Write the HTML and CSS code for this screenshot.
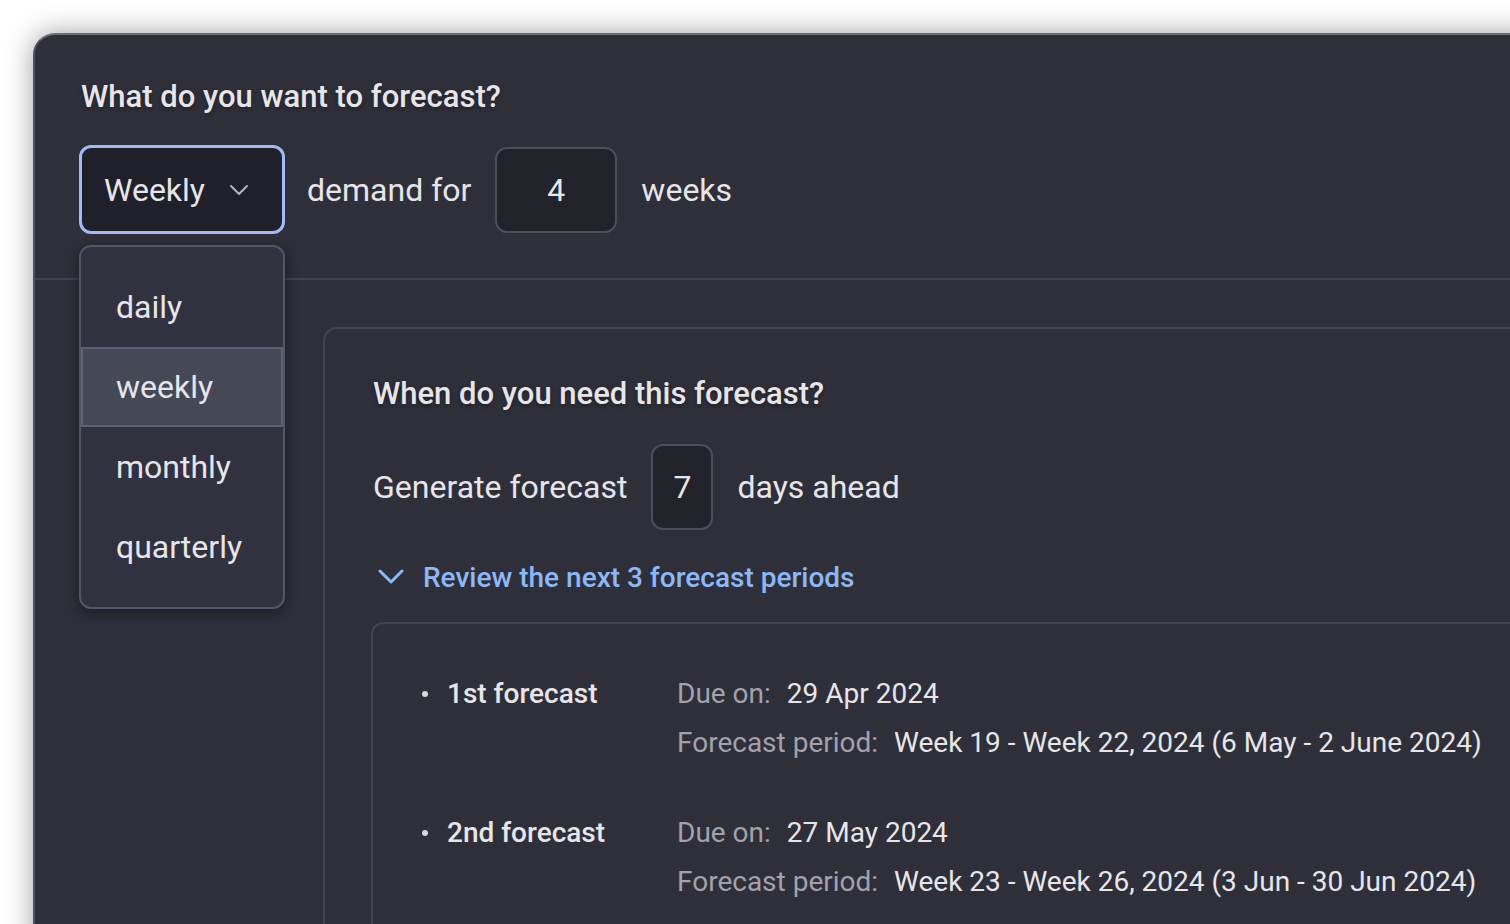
FILE: index.html
```html
<!DOCTYPE html>
<html lang="en">
<head>
  <meta charset="UTF-8" />
  <title>Forecast Settings</title>
  <link rel="stylesheet" href="styles.css">
</head>
<body>
  <div class="panel">
    <section class="top">
      <h1 class="question">What do you want to forecast?</h1>
      <div class="row">
        <div class="select-wrap">
          <button type="button" class="select">
            <span>Weekly</span>
            <svg class="chev" width="20" height="12" viewBox="0 0 20 12"><path d="M2 2 L10 10 L18 2" fill="none" stroke="#b4b4bc" stroke-width="2" stroke-linecap="round" stroke-linejoin="round"/></svg>
          </button>
          <ul class="menu">
            <li>daily</li>
            <li class="active">weekly</li>
            <li>monthly</li>
            <li>quarterly</li>
          </ul>
        </div>
        <span>demand for</span>
        <div class="num wide">4</div>
        <span>weeks</span>
      </div>
    </section>

    <section class="bottom">
      <div class="card">
        <h2 class="question">When do you need this forecast?</h2>
        <div class="row short">
          <span>Generate forecast</span>
          <div class="num narrow">7</div>
          <span>days ahead</span>
        </div>
        <button type="button" class="toggle">
          <svg width="26" height="16" viewBox="0 0 26 16"><path d="M2 2 L13 13 L24 2" fill="none" stroke="#8cb8f8" stroke-width="3" stroke-linecap="round" stroke-linejoin="round"/></svg>
          <span>Review the next 3 forecast periods</span>
        </button>
        <div class="periods">
          <div class="period">
            <span class="dot"></span>
            <span class="name">1st forecast</span>
            <div class="details">
              <div><span class="label">Due on:</span>29 Apr 2024</div>
              <div><span class="label">Forecast period:</span>Week 19 - Week 22, 2024 (6 May - 2 June 2024)</div>
            </div>
          </div>
          <div class="period">
            <span class="dot"></span>
            <span class="name">2nd forecast</span>
            <div class="details">
              <div><span class="label">Due on:</span>27 May 2024</div>
              <div><span class="label">Forecast period:</span>Week 23 - Week 26, 2024 (3 Jun - 30 Jun 2024)</div>
            </div>
          </div>
        </div>
      </div>
    </section>
  </div>
</body>
</html>
```

FILE: styles.css
```css
html, body { margin: 0; height: 100%; }
body {
  background: #fff; overflow: hidden;
  font-family: Roboto, "Liberation Sans", sans-serif; color: #e6e6ea;
}
.panel {
  margin: 33px 0 0 33px; width: 1600px; height: 1000px;
  background: #2f2f3a; border: 2px solid #4f4f63; border-top-color: #6c6c7c;
  border-radius: 22px 0 0 0;
  box-shadow: 0 0 28px rgba(0, 0, 0, 0.38);
}
.question {
  margin: 0; font-size: 31px; line-height: 38px; font-weight: 500;
  text-shadow: 0 2px 4px rgba(0, 0, 0, 0.35);
}
.top { padding: 43px 0 44px 44px; border-bottom: 2px solid #424252; }
.top .question { padding-left: 2px; }
.row {
  display: flex; align-items: center; gap: 22px;
  margin-top: 29px; height: 89px; font-size: 32px;
}
.select-wrap { position: relative; }
.select {
  display: flex; align-items: center; justify-content: space-between;
  box-sizing: border-box; width: 206px; height: 89px;
  padding: 0 33px 0 22px; background: #20202a;
  border: 3px solid #9fbaf6; border-radius: 12px;
  color: #e6e6ea; font: inherit;
}
.menu {
  position: absolute; top: 100px; left: 0; z-index: 2;
  box-sizing: border-box; width: 206px; margin: 0; padding: 20px 0;
  list-style: none; background: #313140;
  border: 2px solid #55556a; border-radius: 12px;
  box-shadow: 0 4px 14px rgba(0, 0, 0, 0.45);
}
.menu li {
  box-sizing: border-box; height: 80px; line-height: 76px;
  padding-left: 33px; border: 2px solid transparent;
}
.menu li.active { background: #454856; border-color: #5e6176; }
.num {
  box-sizing: border-box; height: 86px;
  display: flex; align-items: center; justify-content: center;
  background: #22222b; border: 2px solid #4d4d5c; border-radius: 12px;
}
.num.wide { width: 122px; margin: 0 2px; }
.num.narrow { width: 62px; }
.bottom { padding: 47px 0 0 288px; }
.card {
  padding: 46px 0 0 48px; height: 700px;
  border: 2px solid #434355; border-right: none;
  border-radius: 14px 0 0 0;
}
.row.short { height: 86px; margin-top: 31px; gap: 24px; }
.toggle {
  display: flex; align-items: center; gap: 19px;
  margin-top: 29px; padding: 0 0 0 5px; height: 36px;
  background: none; border: none; color: #8cb8f8;
  font: 500 28px Roboto, "Liberation Sans", sans-serif;
}
.periods {
  margin: 27px 0 0 -2px; padding: 52px 0 0 49px; height: 400px;
  border: 2px solid #434355; border-right: none;
  border-radius: 12px 0 0 0; font-size: 28px;
}
.period { display: flex; align-items: flex-start; margin-bottom: 54px; }
.dot {
  width: 6px; height: 6px; margin: 15px 19px 0 0;
  border-radius: 50%; background: #d8d8de;
}
.name { width: 230px; line-height: 36px; font-weight: 500; }
.details { display: flex; flex-direction: column; gap: 13px; line-height: 36px; }
.label { color: #a2a2ac; margin-right: 16px; }
```
